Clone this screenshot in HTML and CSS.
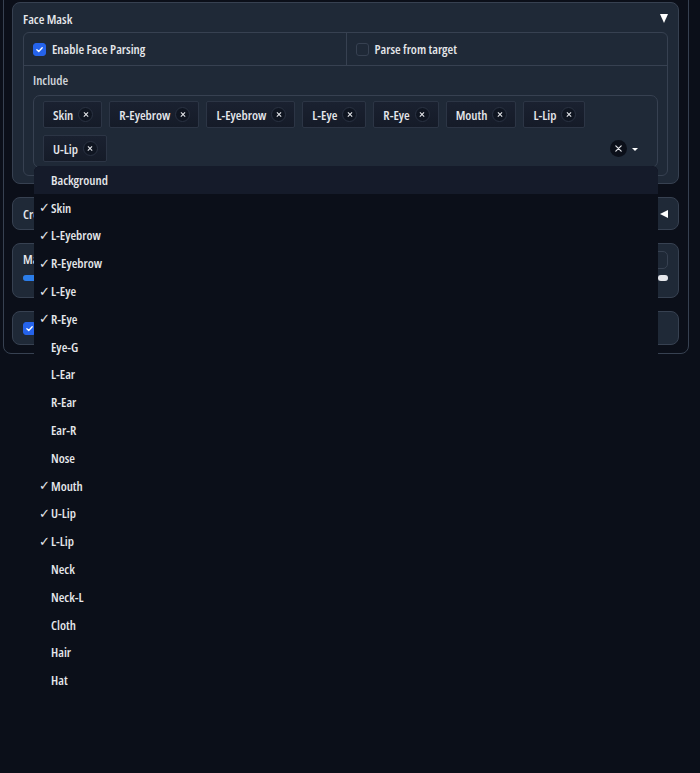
FILE: index.html
```html
<!DOCTYPE html>
<html>
<head>
<meta charset="utf-8">
<link rel="stylesheet" href="styles.css">
</head>
<body>
<div class="column">
  <div class="block accordion">
    <div class="acc-head"><span class="title">Face Mask</span><span class="tri-down"></span></div>
    <div class="form">
      <div class="cb-row">
        <label class="cb-cell"><span class="cb checked"><svg viewBox="0 0 12 12" width="9" height="9"><path d="M2.5 6.3 L5 8.6 L9.6 3.6" fill="none" stroke="#fff" stroke-width="1.8" stroke-linecap="round" stroke-linejoin="round"/></svg></span><span>Enable Face Parsing</span></label>
        <label class="cb-cell cb-cell-right"><span class="cb"></span><span>Parse from target</span></label>
      </div>
      <div class="include">
        <div class="lbl">Include</div>
        <div class="dropdown">
          <div class="tags">
            <span class="tag">Skin<span class="x"></span></span>
            <span class="tag">R-Eyebrow<span class="x"></span></span>
            <span class="tag">L-Eyebrow<span class="x"></span></span>
            <span class="tag">L-Eye<span class="x"></span></span>
            <span class="tag">R-Eye<span class="x"></span></span>
            <span class="tag">Mouth<span class="x"></span></span>
            <span class="tag">L-Lip<span class="x"></span></span>
            <span class="tag">U-Lip<span class="x"></span></span>
            <span class="secondary">
              <span class="clear"><svg viewBox="0 0 10 10" width="9" height="9"><path d="M2 2 L8 8 M8 2 L2 8" stroke="#e5e7eb" stroke-width="1.3" stroke-linecap="round"/></svg></span>
              <span class="caret"></span>
            </span>
          </div>
          <ul class="options">
            <li class="active"><span class="chk"></span>Background</li>
            <li><span class="chk">✓</span>Skin</li>
            <li><span class="chk">✓</span>L-Eyebrow</li>
            <li><span class="chk">✓</span>R-Eyebrow</li>
            <li><span class="chk">✓</span>L-Eye</li>
            <li><span class="chk">✓</span>R-Eye</li>
            <li><span class="chk"></span>Eye-G</li>
            <li><span class="chk"></span>L-Ear</li>
            <li><span class="chk"></span>R-Ear</li>
            <li><span class="chk"></span>Ear-R</li>
            <li><span class="chk"></span>Nose</li>
            <li><span class="chk">✓</span>Mouth</li>
            <li><span class="chk">✓</span>U-Lip</li>
            <li><span class="chk">✓</span>L-Lip</li>
            <li><span class="chk"></span>Neck</li>
            <li><span class="chk"></span>Neck-L</li>
            <li><span class="chk"></span>Cloth</li>
            <li><span class="chk"></span>Hair</li>
            <li><span class="chk"></span>Hat</li>
          </ul>
        </div>
      </div>
    </div>
  </div>
  <div class="block closed">
    <span class="title">Crop Mask</span><span class="tri-left"></span>
  </div>
  <div class="block slider-block">
    <div class="slider-head"><span class="title">Mask Blur</span><span class="num"></span></div>
    <div class="track"><span class="fill"></span><span class="thumb"></span></div>
  </div>
  <div class="block cb-block">
    <span class="cb checked"><svg viewBox="0 0 12 12" width="9" height="9"><path d="M2.5 6.3 L5 8.6 L9.6 3.6" fill="none" stroke="#fff" stroke-width="1.8" stroke-linecap="round" stroke-linejoin="round"/></svg></span>
    <span>Enable</span>
  </div>
</div>
</body>
</html>
```
FILE: styles.css
```css
* { box-sizing: border-box; }
html, body {
  margin: 0;
  padding: 0;
  background: #0b0f19;
  height: 100%;
}
body {
  font-family: "Open Sans", "Lato", sans-serif;
  font-stretch: 85%;
  font-size: 13px;
  font-weight: 550;
  color: #e5e7eb;
  overflow: hidden;
}
.column {
  margin: -13px 11px 0 3px;
  padding: 14px 9px 8px 8px;
  border: 1px solid #374151;
  border-radius: 8px;
  display: flex;
  flex-direction: column;
  gap: 13px;
}
.block {
  background: #1f2937;
  border: 1px solid #374151;
  border-radius: 8px;
  padding: 0 10px;
}
.accordion {
  padding: 7px 10px 7px 10px;
}
.acc-head {
  height: 17px;
  display: flex;
  align-items: center;
  justify-content: space-between;
  margin-bottom: 5px;
}
.title { line-height: 16px; }
.tri-down {
  width: 0; height: 0;
  border-left: 4.5px solid transparent;
  border-right: 4.5px solid transparent;
  border-top: 9px solid #ffffff;
}
.form {
  border: 1px solid #374151;
  border-radius: 6px;
  background: #1f2937;
}
.cb-row {
  display: grid;
  grid-template-columns: 1fr 1fr;
  height: 33px;
  border-bottom: 1px solid #374151;
}
.cb-cell {
  display: flex;
  align-items: center;
  gap: 6px;
  padding-left: 9px;
}
.cb-cell-right { border-left: 1px solid #374151; }
.cb {
  width: 13px;
  height: 13px;
  border-radius: 3px;
  border: 1px solid #374151;
  background: #1f2937;
  display: flex;
  align-items: center;
  justify-content: center;
  flex: none;
}
.cb.checked {
  background: #2563eb;
  border-color: #2563eb;
}
.include {
  padding: 6px 9px 7px 9px;
}
.lbl {
  line-height: 16px;
  color: #d1d5db;
  margin-bottom: 7px;
}
.dropdown {
  position: relative;
  border: 1px solid #374151;
  border-radius: 7px;
  background: #1f2937;
}
.tags {
  display: flex;
  flex-wrap: wrap;
  gap: 7px;
  padding: 5px 9px 5px 9px;
}
.tag {
  display: inline-flex;
  align-items: center;
  height: 27px;
  padding: 0 8px 0 9px;
  gap: 5px;
  background: linear-gradient(#1a2130, #151b28);
  border: 1px solid #2c3545;
  border-radius: 2px;
  color: #e5e7eb;
}
.x {
  width: 15px;
  height: 15px;
  border-radius: 50%;
  background: #0f1521;
  border: 1px solid #2a3242;
  position: relative;
}
.x::before, .x::after {
  content: "";
  position: absolute;
  left: 3.5px;
  top: 6px;
  width: 6px;
  height: 1.2px;
  background: #e5e7eb;
  transform: rotate(45deg);
}
.x::after { transform: rotate(-45deg); }
.secondary {
  flex: 1;
  display: flex;
  align-items: center;
  justify-content: flex-end;
  gap: 5px;
  padding-right: 10px;
  height: 27px;
}
.clear {
  width: 17px;
  height: 17px;
  border-radius: 50%;
  background: #0b0f19;
  display: flex;
  align-items: center;
  justify-content: center;
}
.caret {
  width: 0; height: 0;
  border-left: 3px solid transparent;
  border-right: 3px solid transparent;
  border-top: 3px solid #ffffff;
  margin-top: 1px;
}
.options {
  position: absolute;
  top: calc(100% - 1px);
  left: 0;
  right: -1px;
  margin: 0;
  padding: 0;
  list-style: none;
  background: #0b0f19;
  border-radius: 6px 6px 0 0;
  overflow: hidden;
  z-index: 5;
}
.options li {
  height: 27.8px;
  display: flex;
  align-items: center;
  padding-left: 5px;
  color: #e5e7eb;
}
.options li.active { background: #151b2a; }
.chk {
  width: 12px;
  font-family: "DejaVu Sans", sans-serif;
  font-weight: 400;
  font-stretch: normal;
  font-size: 13px;
  flex: none;
}
.closed {
  height: 33px;
  display: flex;
  align-items: center;
  justify-content: space-between;
}
.tri-left {
  width: 0; height: 0;
  border-top: 4.5px solid transparent;
  border-bottom: 4.5px solid transparent;
  border-right: 8px solid #ffffff;
}
.slider-block {
  height: 55px;
  padding: 6px 10px;
}
.slider-head {
  display: flex;
  justify-content: space-between;
  align-items: flex-start;
  height: 20px;
}
.slider-head .title { margin-top: 1px; }
.num {
  width: 60px;
  height: 18px;
  border: 1px solid #374151;
  border-radius: 5px;
  background: #1f2937;
  margin-top: 1px;
}
.track {
  position: relative;
  height: 6px;
  margin-top: 5px;
  background: #374151;
  border-radius: 3px;
}
.fill {
  position: absolute;
  left: 0; top: 0; bottom: 0;
  width: 40%;
  background: #2b7de9;
  border-radius: 3px;
}
.thumb {
  position: absolute;
  right: 0; top: 0;
  width: 10px; height: 6px;
  background: #e5e7eb;
  border-radius: 3px;
}
.cb-block {
  height: 34px;
  display: flex;
  align-items: center;
  gap: 7px;
}
```
